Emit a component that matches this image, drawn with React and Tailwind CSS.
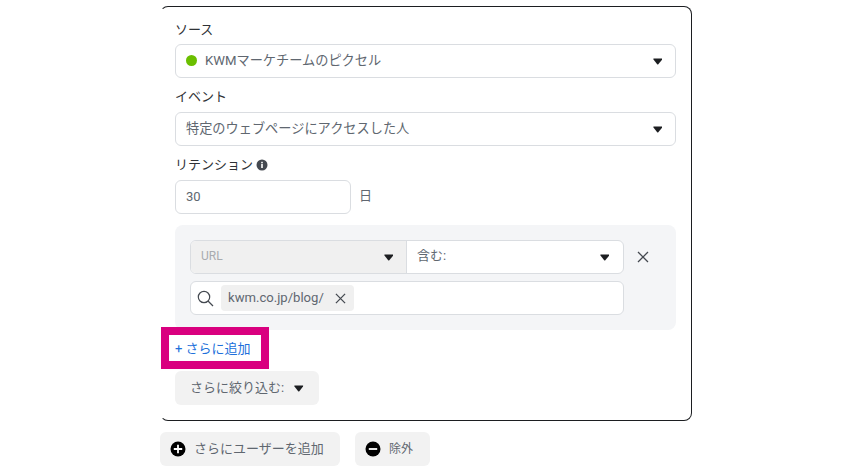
const Caret = () => (
  <svg width="9.5" height="7" viewBox="0 0 10 7" preserveAspectRatio="none" className="shrink-0">
    <path d="M0.6 0.6 H9.4 Q9.9 0.6 9.5 1.6 L5.6 6.2 Q5 6.8 4.4 6.2 L0.5 1.6 Q0.1 0.6 0.6 0.6 Z" fill="#1c1e21" />
  </svg>
);

const Select = ({ children, className = "" }) => (
  <div className={`flex h-[34px] w-[501px] items-center justify-between rounded-[6px] border border-[#dadde1] bg-white pl-[10px] pr-[13px] ${className}`}>
    <div className="flex items-center">{children}</div>
    <Caret />
  </div>
);

const Label = ({ children }) => (
  <div className="mb-[7px] flex h-4 items-center text-[13px] font-normal leading-4 text-[#2f3236]">{children}</div>
);

const Cross = ({ size, color, width }) => (
  <svg width={size} height={size} viewBox="0 0 12 12" className="shrink-0">
    <path d="M1 1 L11 11 M11 1 L1 11" stroke={color} strokeWidth={width} fill="none" />
  </svg>
);

const Round = ({ plus }) => (
  <svg width="16" height="16" viewBox="0 0 16 16" className="shrink-0">
    <circle cx="8" cy="8" r="7.5" fill="#000" />
    <path d={plus ? "M3.8 8 H12.2 M8 3.8 V12.2" : "M3.8 8 H12.2"} stroke="#fff" strokeWidth="1.8" />
  </svg>
);

export default function App() {
  return (
    <div className="h-[474px] w-[850px] overflow-hidden bg-white pl-[160px] pt-[6px] font-[Roboto,'Noto_Sans_CJK_JP',sans-serif] text-[#606770]">
      <div className="h-[415px] w-[532px] rounded-[8px] border border-[#1c1e21] border-l-transparent px-[14px] pt-[15px]">
        <Label>ソース</Label>
        <Select className="mt-[-1px] text-[13.2px] text-[#606770]">
          <span className="mr-2 h-[11px] w-[11px] rounded-full bg-[#6bbf00]" />
          KWMマーケチームのピクセル
        </Select>
        <div className="mt-[11px]">
          <Label>イベント</Label>
          <Select className="text-[13.2px] text-[#606770]">特定のウェブページにアクセスした人</Select>
        </div>
        <div className="mt-[11px]">
          <Label>
            リテンション
            <svg width="12" height="12" viewBox="0 0 12 12" className="ml-[3px]">
              <circle cx="6" cy="6" r="5.5" fill="#444950" />
              <rect x="5.2" y="5" width="1.6" height="4" fill="#fff" />
              <rect x="5.2" y="2.8" width="1.6" height="1.5" fill="#fff" />
            </svg>
          </Label>
          <div className="flex items-center">
            <div className="flex h-[34px] w-[176px] items-center rounded-[6px] border border-[#dadde1] pb-[1px] pl-[10px] text-[13px] text-[#606770]">30</div>
            <span className="mb-[2px] ml-2 text-[13px] text-[#606770]">日</span>
          </div>
        </div>
        <div className="mt-[11px] h-[105px] w-[501px] rounded-[8px] bg-[#f4f5f7] p-[15px]">
          <div className="flex items-center">
            <div className="flex h-[34px] w-[434px] rounded-[6px] border border-[#dadde1] bg-white">
              <div className="flex w-[216px] items-center justify-between rounded-l-[5px] border-r border-[#dadde1] bg-[#f0f0f0] pl-[10px] pr-[13px] text-[12px] text-[#a8abaf]">
                <span className="mb-[2px]">URL</span>
                <Caret />
              </div>
              <div className="flex flex-1 items-center justify-between pl-[10px] pr-[14px] text-[13px] text-[#606770]">
                <span className="mb-[3px]">含む:</span>
                <Caret />
              </div>
            </div>
            <div className="ml-[13px]">
              <Cross size={12} color="#444950" width={1.3} />
            </div>
          </div>
          <div className="mt-[7px] flex h-[34px] w-[434px] items-center rounded-[6px] border border-[#dadde1] bg-white pl-[6px]">
            <svg width="17" height="17" viewBox="0 0 17 17" className="shrink-0">
              <circle cx="7" cy="7" r="5.7" stroke="#444950" strokeWidth="1.2" fill="none" />
              <path d="M11 11 L16 16" stroke="#444950" strokeWidth="1.3" />
            </svg>
            <div className="ml-[7px] flex h-[26px] w-[133px] items-center rounded-[4px] bg-[#f0f0f0] pl-[7px] text-[13.1px] text-[#606770]">
              kwm.co.jp/blog/
              <span className="ml-[11px]"><Cross size={11} color="#444950" width={1.4} /></span>
            </div>
          </div>
        </div>
        <div className="relative flex h-[41px] items-center pb-[3px] text-[13px] text-[#216fdb]">
          + さらに追加
          <div className="absolute left-[-14px] top-[-3px] h-[42px] w-[108px] border-[8px] border-[#d9007f]" />
        </div>
        <button className="flex h-[34px] w-[144px] items-center gap-[10px] rounded-[6px] bg-[#f2f2f2] pl-[15px] text-[13px] text-[#606770]">
          さらに絞り込む:
          <Caret />
        </button>
      </div>
      <div className="mt-[11px] flex gap-[15px]">
        <button className="flex h-[34px] w-[180px] items-center rounded-[6px] bg-[#f2f2f2] pl-[10px] text-[13px] text-[#606770]">
          <Round plus />
          <span className="ml-[8px]">さらにユーザーを追加</span>
        </button>
        <button className="flex h-[34px] w-[75px] items-center rounded-[6px] bg-[#f2f2f2] pl-[10px] text-[12px] text-[#606770]">
          <Round />
          <span className="ml-[8px]">除外</span>
        </button>
      </div>
    </div>
  );
}
